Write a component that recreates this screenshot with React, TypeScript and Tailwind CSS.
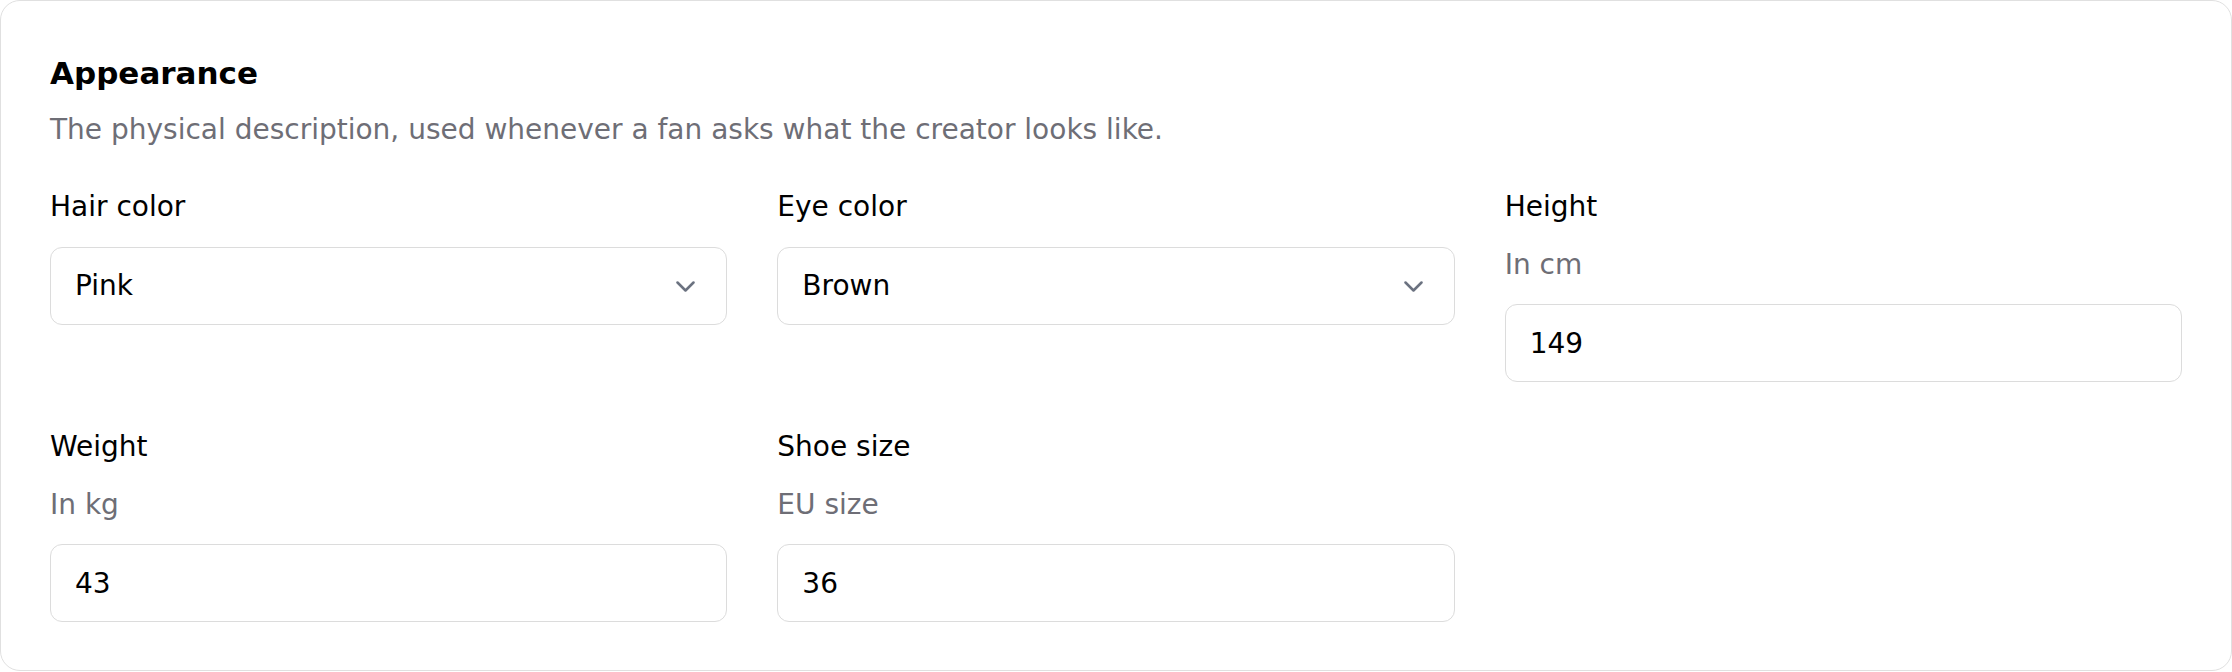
import React from "react";

type Field = {
    label: string;
    hint?: string;
    value: string;
    select?: boolean;
};

const FIELDS: Field[] = [
    { label: "Hair color", value: "Pink", select: true },
    { label: "Eye color", value: "Brown", select: true },
    { label: "Height", hint: "In cm", value: "149" },
    { label: "Weight", hint: "In kg", value: "43" },
    { label: "Shoe size", hint: "EU size", value: "36" },
];

const ChevronDown = () => (
    <svg width="19" height="11" viewBox="0 0 19 11" fill="none" className="shrink-0 text-[#6b7280]">
        <path d="M1.5 1.5 L9.5 9.5 L17.5 1.5" stroke="currentColor" strokeWidth="2.5" strokeLinecap="round" strokeLinejoin="round" />
    </svg>
);

const FormField: React.FC<{ field: Field }> = ({ field }) => (
    <div className="flex flex-col">
        <label className="text-[28px] leading-[42px] text-black">{field.label}</label>
        {field.hint && <p className="mt-[16px] text-[28px] leading-[42px] text-[#6e6e76]">{field.hint}</p>}

        {field.select ? (
            <button
                type="button"
                className="mt-[19px] flex h-[78px] w-full items-center justify-between rounded-[12px] border border-[#dcdcdc] bg-white pl-[24px] pr-[31px] text-left text-[28px] text-black"
            >
                <span>{field.value}</span>
                <ChevronDown />
            </button>
        ) : (
            <input
                readOnly
                defaultValue={field.value}
                className="mt-[18px] h-[78px] w-full rounded-[12px] border border-[#dcdcdc] bg-white px-[24px] text-[28px] text-black outline-none"
            />
        )}
    </div>
);

export default function App() {
    return (
        <div className="min-h-screen bg-white font-['DejaVu_Sans','Liberation_Sans',sans-serif]">
            <section className="rounded-[20px] border border-[#e0e0e0] bg-white px-[49px] pt-[49px] pb-[48px]">
                {/* Header */}
                <h2 className="text-[31px] font-bold leading-[46px] text-black">Appearance</h2>
                <p className="mt-[13px] text-[28px] leading-[42px] text-[#6e6e76]">
                    The physical description, used whenever a fan asks what the creator looks like.
                </p>

                {/* Fields */}
                <div className="mt-[35px] grid grid-cols-3 gap-x-[50px] gap-y-[44px]">
                    {FIELDS.map((f) => (
                        <FormField key={f.label} field={f} />
                    ))}
                </div>
            </section>
        </div>
    );
}
